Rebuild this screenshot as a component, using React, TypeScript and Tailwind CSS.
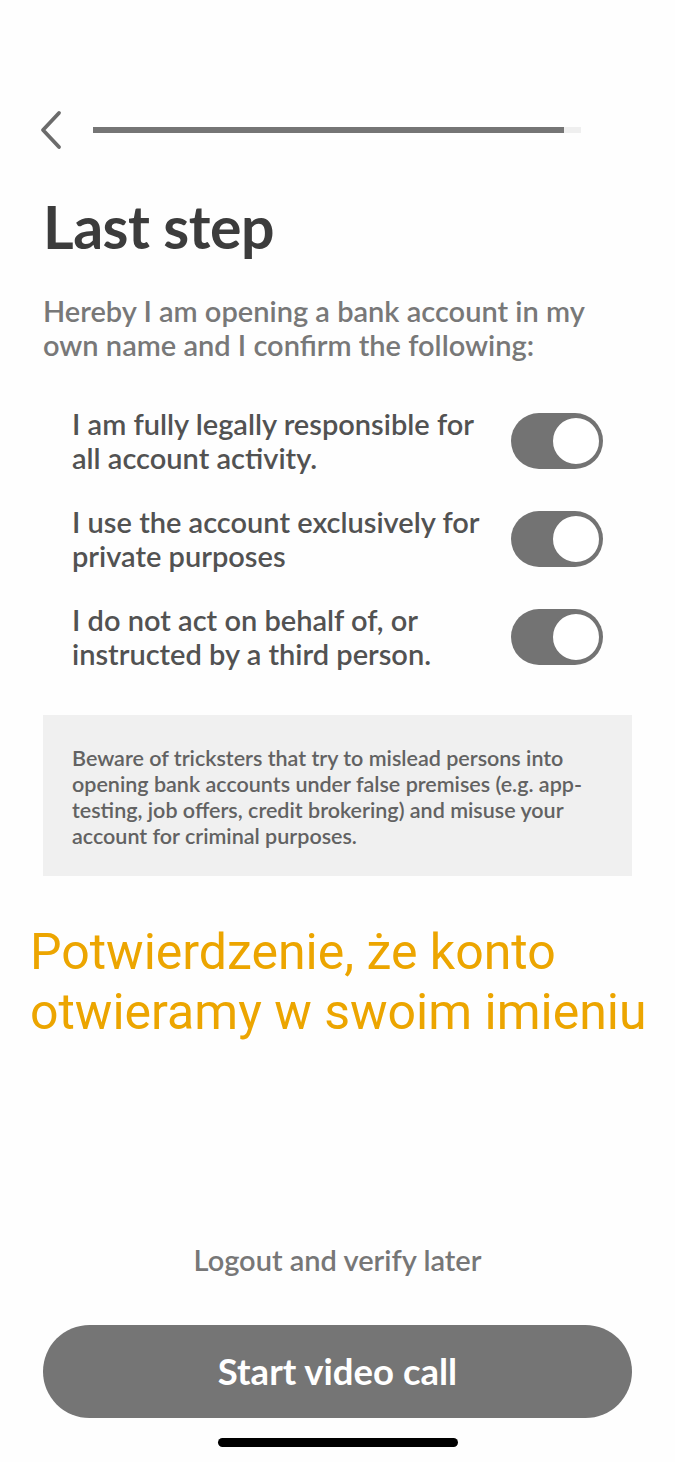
import { useState } from 'react';

const statements = [
  'I am fully legally responsible for all account activity.',
  'I use the account exclusively for private purposes',
  'I do not act on behalf of, or instructed by a third person.',
];

function Toggle({ on, onClick }: { on: boolean; onClick: () => void }) {
  return (
    <button
      onClick={onClick}
      className={`relative w-[92px] h-[56px] rounded-full shrink-0 ${on ? 'bg-[#737373]' : 'bg-[#d9d9d9]'}`}
    >
      <span
        className={`absolute top-[2px] w-[52px] h-[52px] rounded-full bg-white border-[3px] border-[#737373] ${on ? 'right-[1px]' : 'left-[1px]'}`}
      ></span>
    </button>
  );
}

export default function App() {
  const [checks, setChecks] = useState([true, true, true]);

  return (
    <div className="w-[675px] h-[1462px] bg-[#fefefe] flex flex-col font-['Lato','Liberation_Sans',sans-serif]">
      {/* cabecera con progreso */}
      <div className="flex items-center mt-[110px] h-[40px] pl-[38px] pr-[94px]">
        <svg width="26" height="40" viewBox="0 0 26 40" fill="none">
          <path d="M21 3 L5 20 L21 37" stroke="#6b6b6b" strokeWidth="3.8" strokeLinecap="round" strokeLinejoin="round" />
        </svg>
        <div className="ml-[29px] flex-1 h-[6px] bg-[#efefef]">
          <div className="h-full w-[96.6%] bg-[#757575]"></div>
        </div>
      </div>

      <h1 className="mt-[42px] px-[43px] text-[59px] leading-[70px] font-bold text-[#3c3c3c] tracking-[-0.5px]">
        Last step
      </h1>

      <p className="mt-[32px] px-[43px] pr-[70px] text-[29px] leading-[34px] font-semibold text-[#787878]">
        Hereby I am opening a bank account in my own name and I confirm the following:
      </p>

      <div className="mt-[45px] flex flex-col gap-[30px] pl-[72px] pr-[72px]">
        {statements.map((text, i) => (
          <div key={i} className="flex items-center justify-between">
            <p className="w-[420px] text-[29px] leading-[34px] font-semibold text-[#525252]">{text}</p>
            <Toggle
              on={checks[i]}
              onClick={() => setChecks(prev => prev.map((c, j) => (j === i ? !c : c)))}
            />
          </div>
        ))}
      </div>

      <div className="mt-[44px] mx-[43px] bg-[#f0f0f0] h-[161px] pl-[29px] pr-[34px] pt-[30px]">
        <p className="text-[21.5px] leading-[26px] font-semibold text-[#626262]">
          Beware of tricksters that try to mislead persons into opening bank accounts under false premises (e.g. app-testing, job offers, credit brokering) and misuse your account for criminal purposes.
        </p>
      </div>

      <p className="mt-[46px] pl-[30px] text-[50px] leading-[60px] text-[#eca500] font-['Roboto',sans-serif]">
        Potwierdzenie, że konto otwieramy w swoim imieniu
      </p>

      <div className="flex-1"></div>

      <button className="self-center text-[29px] leading-[34px] font-semibold text-[#777777]">
        Logout and verify later
      </button>

      <button className="mt-[48px] mx-[43px] h-[93px] rounded-full bg-[#757575] text-white text-[36.5px] font-bold">
        Start video call
      </button>

      <div className="mt-[20px] mb-[15px] self-center w-[240px] h-[9px] rounded-full bg-black"></div>
    </div>
  );
}
